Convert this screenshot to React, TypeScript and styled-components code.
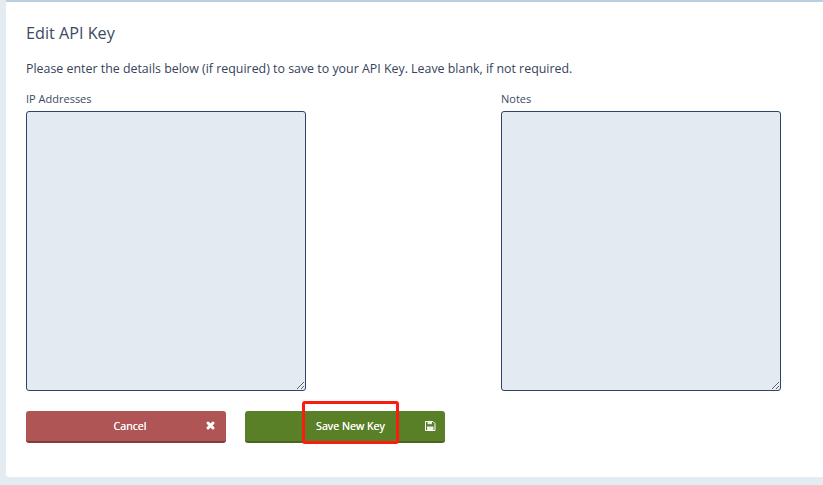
import React from "react";
import styled, { createGlobalStyle } from "styled-components";

const Global = createGlobalStyle`
  html, body { margin: 0; padding: 0; background: #e4ebf1; }
  body { font-family: "Open Sans", "Noto Sans", sans-serif; overflow: hidden; }
`;

const Page = styled.div`
  width: 823px;
  height: 485px;
  box-sizing: border-box;
  padding: 0 0 8px 6px;
  background: #e4ebf1;
`;

const Card = styled.section`
  position: relative;
  box-sizing: border-box;
  height: 477px;
  padding: 20px 20px 0 20px;
  background: #fff;
  border-top: 2px solid #bccfdf;
  border-radius: 0 0 0 3px;
`;

const Title = styled.h2`
  margin: 0;
  font-size: 16.2px;
  line-height: 22px;
  font-weight: 400;
  color: #3c4a63;
`;

const Intro = styled.p`
  margin: 15px 0 0;
  font-size: 12.4px;
  line-height: 20px;
  color: #36435b;
`;

const Fields = styled.div`
  display: flex;
  gap: 195px;
  margin-top: 13px;
`;

const Field = styled.label`
  display: flex;
  flex-direction: column;
  width: 280px;
`;

const FieldLabel = styled.span`
  font-size: 11px;
  line-height: 14px;
  height: 14px;
  color: #3c4a63;
`;

const Area = styled.textarea`
  box-sizing: border-box;
  width: 280px;
  height: 280px;
  margin-top: 5px;
  display: block;
  background: #e3eaf1;
  border: 1px solid #2f4366;
  border-radius: 3px;
  outline: none;
`;

const Actions = styled.div`
  display: flex;
  gap: 19px;
  margin-top: 20px;
`;

const Button = styled.button<{ $bg: string; $edge: string; $shift: number }>`
  position: relative;
  box-sizing: border-box;
  width: 200px;
  height: 32px;
  padding: 0 0 0 ${(p) => p.$shift}px;
  border: 0;
  border-bottom: 2px solid ${(p) => p.$edge};
  border-radius: 3px;
  background: ${(p) => p.$bg};
  color: #fff;
  font-family: inherit;
  font-size: 10.7px;
  line-height: 15px;
  font-weight: 400;
  text-align: center;
  text-shadow: 0 0 0.4px #fff;
`;

const ButtonIcon = styled.svg`
  position: absolute;
  right: 9px;
  top: 9px;
  width: 12px;
  height: 12px;
  display: block;
`;

const Highlight = styled.div`
  position: absolute;
  left: 296px;
  top: 399px;
  width: 97px;
  height: 43px;
  box-sizing: border-box;
  border: 3px solid #fb1c10;
  border-radius: 3px;
  pointer-events: none;
`;

export default function App() {
  return (
    <>
      <Global />
      <Page>
        <Card>
          <Title>Edit API Key</Title>
          <Intro>
            Please enter the details below (if required) to save to your API Key. Leave blank, if not required.
          </Intro>
          <Fields>
            <Field>
              <FieldLabel>IP Addresses</FieldLabel>
              <Area />
            </Field>
            <Field>
              <FieldLabel>Notes</FieldLabel>
              <Area />
            </Field>
          </Fields>
          <Actions>
            <Button $bg="#b05555" $edge="#833b3b" $shift={8}>
              Cancel
              <ButtonIcon viewBox="0 0 12 12" aria-hidden="true">
                <path d="M3 3 L8 8 M8 3 L3 8" stroke="#fff" strokeWidth="3" strokeLinecap="round" fill="none" />
              </ButtonIcon>
            </Button>
            <Button $bg="#5a8027" $edge="#46651d" $shift={11}>
              Save New Key
              <ButtonIcon viewBox="0 0 12 12" aria-hidden="true">
                <path d="M1.5 1.5 H9 L11 3.5 V10.5 H1.5 Z" stroke="#fff" strokeWidth="1" fill="none" />
                <path d="M3.5 1.5 H8 V4.2 H3.5 Z" fill="#fff" opacity="0.85" />
                <path d="M3 6.5 H9.5 V10.5 H3 Z" fill="#fff" opacity="0.9" />
              </ButtonIcon>
            </Button>
          </Actions>
          <Highlight />
        </Card>
      </Page>
    </>
  );
}
